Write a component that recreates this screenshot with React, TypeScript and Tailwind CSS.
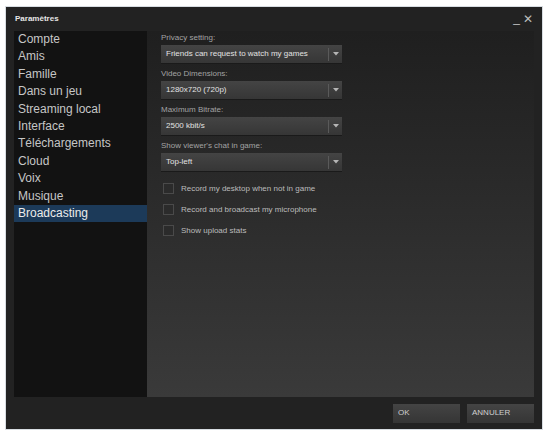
const sections = [
  "Compte",
  "Amis",
  "Famille",
  "Dans un jeu",
  "Streaming local",
  "Interface",
  "Téléchargements",
  "Cloud",
  "Voix",
  "Musique",
  "Broadcasting",
];

function Dropdown({ label, value }: { label: string; value: string }) {
  return (
    <div className="mb-[5px]">
      <p className="text-[8px] leading-[11px] text-[#a3a3a3]">{label}</p>
      <div className="mt-[2px] flex h-[18px] w-[181px] items-center bg-gradient-to-b from-[#444444] to-[#363636] shadow-[0_1px_0_#1a1a1a]">
        <span className="flex-1 pl-[5px] text-[8px] text-[#e2e2e2]">{value}</span>
        <span className="h-[13px] w-px bg-[#5a5a5a]" />
        <span className="flex w-[13px] justify-center">
          <svg width="6" height="4" viewBox="0 0 6 4">
            <path d="M0 0h6L3 3.5z" fill="#b5b5b5" />
          </svg>
        </span>
      </div>
    </div>
  );
}

function Check({ label }: { label: string }) {
  return (
    <div className="flex h-[21px] items-center gap-[7px] pl-[2px]">
      <span className="h-[11px] w-[11px] border border-[#4a4a4a] bg-[#2b2b2b]" />
      <span className="text-[8px] text-[#bcbcbc]">{label}</span>
    </div>
  );
}

function FooterButton({ children }: { children: React.ReactNode }) {
  return (
    <button
      type="button"
      className="h-[19px] w-[67px] bg-gradient-to-b from-[#444444] to-[#353535] pl-[5px] text-left text-[8px] text-[#cfcfcf]"
    >
      {children}
    </button>
  );
}

export default function App() {
  return (
    <div className="h-[438px] w-[550px] bg-white pl-[6px] pt-[7px] font-['Liberation_Sans',Arial,sans-serif]">
      <div className="flex h-[422px] w-[536px] flex-col bg-[#222222] shadow-[0_0_0_1px_#d8dde2]">
        <div className="flex h-[24px] items-center justify-between pl-[9px] pr-[9px]">
          <span className="text-[8px] font-bold text-[#e6e6e6]">Paramètres</span>
          <span className="flex items-center gap-[3px] text-[12px] font-light text-[#bdbdbd]">
            <span className="-mt-[3px]">_</span>
            <span>✕</span>
          </span>
        </div>

        <div className="flex h-[366px] px-[8px]">
          <nav className="w-[133px] bg-[#121212]">
            {sections.map((s) => (
              <div
                key={s}
                className={
                  s === "Broadcasting"
                    ? "h-[17.4px] bg-[#1c3a59] pl-[4px] text-[12px] leading-[17.4px] text-[#ececec]"
                    : "h-[17.4px] pl-[4px] text-[12px] leading-[17.4px] text-[#c6c6c6]"
                }
              >
                {s}
              </div>
            ))}
          </nav>
          <main className="flex-1 bg-gradient-to-b from-[#1f1f1f] to-[#3a3a3a] pl-[14px] pt-[1px]">
            <Dropdown label="Privacy setting:" value="Friends can request to watch my games" />
            <Dropdown label="Video Dimensions:" value="1280x720 (720p)" />
            <Dropdown label="Maximum Bitrate:" value="2500 kbit/s" />
            <Dropdown label="Show viewer's chat in game:" value="Top-left" />
            <div className="mt-[7px]">
              <Check label="Record my desktop when not in game" />
              <Check label="Record and broadcast my microphone" />
              <Check label="Show upload stats" />
            </div>
          </main>
        </div>

        <div className="flex flex-1 items-center justify-end gap-[7px] pr-[8px]">
          <FooterButton>OK</FooterButton>
          <FooterButton>ANNULER</FooterButton>
        </div>
      </div>
    </div>
  );
}
